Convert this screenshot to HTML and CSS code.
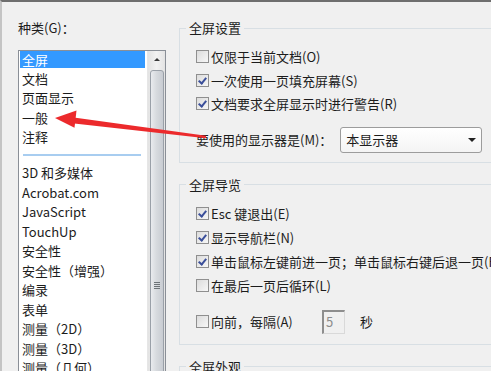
FILE: index.html
```html
<!DOCTYPE html>
<html lang="zh-CN">
<head>
    <meta charset="UTF-8">
    <title>首选项</title>
    <link rel="stylesheet" href="styles.css">
</head>
<body>
<div class="window">
    <!-- category list -->
    <div class="categories">
        <div class="cat-label">种类(G)：</div>
        <div class="listbox">
            <ul class="items">
                <li class="selected">全屏</li>
                <li>文档</li>
                <li>页面显示</li>
                <li>一般</li>
                <li>注释</li>
                <li class="sep"></li>
                <li>3D 和多媒体</li>
                <li>Acrobat.com</li>
                <li>JavaScript</li>
                <li>TouchUp</li>
                <li>安全性</li>
                <li>安全性（增强）</li>
                <li>编录</li>
                <li>表单</li>
                <li>测量（2D）</li>
                <li>测量（3D）</li>
                <li>测量（几何）</li>
            </ul>
            <div class="scrollbar">
                <div class="scroll-up"></div>
                <div class="thumb"><span class="grip"></span></div>
            </div>
        </div>
    </div>

    <!-- settings groups -->
    <div class="settings">
        <fieldset class="group group-first">
            <legend>全屏设置</legend>
            <label class="check-row"><span class="box"></span>仅限于当前文档(O)</label>
            <label class="check-row"><span class="box checked"></span>一次使用一页填充屏幕(S)</label>
            <label class="check-row"><span class="box checked"></span>文档要求全屏显示时进行警告(R)</label>
            <div class="field-row">
                <span class="field-label">要使用的显示器是(M)：</span>
                <div class="select">
                    <span>本显示器</span>
                    <span class="caret"></span>
                </div>
            </div>
        </fieldset>

        <fieldset class="group">
            <legend>全屏导览</legend>
            <label class="check-row nav"><span class="box checked"></span>Esc 键退出(E)</label>
            <label class="check-row nav"><span class="box checked"></span>显示导航栏(N)</label>
            <label class="check-row nav"><span class="box checked"></span>单击鼠标左键前进一页；单击鼠标右键后退一页(F)</label>
            <label class="check-row nav"><span class="box"></span>在最后一页后循环(L)</label>
            <div class="field-row">
                <label class="check-row interval"><span class="box"></span>向前，每隔(A)</label>
                <div class="num-input">5</div>
                <span class="unit">秒</span>
            </div>
        </fieldset>

        <fieldset class="group group-last">
            <legend>全屏外观</legend>
        </fieldset>
    </div>

    <!-- red annotation arrow -->
    <svg class="arrow" width="491" height="371" viewBox="0 0 491 371">
        <polygon points="72,117.2 72,123.2 206,138.2 206,135.8" fill="#ec2a2c"/>
        <polygon points="55,118 76.5,110.5 74.5,127.8" fill="#ec2a2c"/>
    </svg>
</div>
</body>
</html>
```

FILE: styles.css
```css
/* dialog base */
body {
    margin: 0;
    background-color: #f0f0f0;
    font-family: "Noto Sans CJK SC", "Noto Sans", sans-serif;
    font-size: 13px;
    color: #1c1c1c;
}
.window {
    position: relative;
    width: 491px;
    height: 371px;
    overflow: hidden;
    display: flex;
    box-sizing: border-box;
    border-top: 2px solid #6e6e6e;
    border-left: 2px solid #c4c4c4;
    padding-left: 16px;
}

/* left column */
.categories {
    width: 148px;
    flex-shrink: 0;
}
.cat-label {
    margin-top: 17px;
    line-height: 18px;
}
.listbox {
    margin-top: 13px;
    height: 340px;
    display: flex;
    background-color: #fff;
    border: 1px solid #8a8f97;
    box-sizing: border-box;
}
.items {
    list-style: none;
    margin: 0;
    padding: 0 2px 0 1px;
    flex: 1;
}
.items li {
    height: 19.5px;
    line-height: 19.5px;
    padding-left: 2px;
    white-space: nowrap;
}
.items li.selected {
    background-color: #3399ff;
    color: #fff;
    height: 17px;
    line-height: 17px;
    margin-bottom: 0.5px;
}
.items li.sep {
    height: 16.5px;
    box-sizing: border-box;
    padding: 7px 4px 0 3px;
}
.items li.sep::after {
    content: "";
    display: block;
    border-top: 2px solid #a8cdf0;
}
.scrollbar {
    width: 17px;
    background: linear-gradient(to right, #e3e3e3, #f2f2f2 50%, #e3e3e3);
    border-left: 1px solid #e6e6e6;
    display: flex;
    flex-direction: column;
    align-items: center;
}
.scroll-up {
    height: 17px;
    width: 100%;
    display: flex;
    align-items: center;
    justify-content: center;
}
.scroll-up::before {
    content: "";
    border-left: 3px solid transparent;
    border-right: 3px solid transparent;
    border-bottom: 3px solid #3a3a3a;
}
.thumb {
    width: 14px;
    flex: 1;
    margin-top: 2px;
    box-sizing: border-box;
    border: 1px solid #9aa0a8;
    border-radius: 3px;
    background: linear-gradient(to right, #e9ebee, #d7dade 45%, #c8ccd2);
    position: relative;
}
.grip {
    position: absolute;
    left: 3px;
    top: 211px;
    width: 6px;
    height: 7px;
    background: repeating-linear-gradient(to bottom, #6d7378 0, #6d7378 1px, transparent 1px, transparent 2px);
}

/* right column */
.settings {
    margin-left: 13px;
    width: 340px;
    flex-shrink: 0;
}
.group {
    margin: 0 0 13px 0;
    border: 1px solid #d8dfe4;
    padding: 8px 0 9px 16px;
    min-width: 0;
}
.group-first {
    margin-top: 17px;
}
.group legend {
    line-height: 18px;
    padding: 0 3px;
    margin-left: -10px;
}
.check-row {
    display: flex;
    align-items: center;
    height: 23.5px;
    white-space: nowrap;
}
.check-row.nav {
    height: 24px;
}
.box {
    width: 13px;
    height: 13px;
    margin-right: 2px;
    box-sizing: border-box;
    border: 1px solid #8f8f8f;
    background: linear-gradient(135deg, #dcdcdc, #f7f7f7);
    position: relative;
    flex-shrink: 0;
}
.box.checked::after {
    content: "";
    position: absolute;
    left: 3px;
    top: 1px;
    width: 3px;
    height: 6px;
    border-right: 2px solid #3b4f9a;
    border-bottom: 2px solid #3b4f9a;
    transform: rotate(40deg);
}
.field-row {
    display: flex;
    align-items: center;
    height: 26px;
    margin-top: 11px;
}
.field-label {
    margin-right: 8px;
    white-space: nowrap;
}
.select {
    width: 142px;
    height: 26px;
    flex-shrink: 0;
    box-sizing: border-box;
    border: 1px solid #9c9c9c;
    border-radius: 3px;
    background: linear-gradient(to bottom, #ffffff, #f4f4f4);
    display: flex;
    align-items: center;
    justify-content: space-between;
    padding: 0 5px 0 5px;
}
.caret {
    border-left: 4px solid transparent;
    border-right: 4px solid transparent;
    border-top: 4px solid #222;
}
.check-row.interval {
    height: 26px;
    width: 126px;
}
.num-input {
    width: 23px;
    height: 24px;
    box-sizing: border-box;
    border: 1px solid #d9d9d9;
    border-left: 2px solid #8e8e8e;
    border-top: 2px solid #8e8e8e;
    color: #8c8c8c;
    padding-left: 2px;
    line-height: 20px;
}
.unit {
    margin-left: 15px;
}
.group-last {
    height: 40px;
}

/* annotation overlay */
.arrow {
    position: absolute;
    left: -2px;
    top: -2px;
    pointer-events: none;
}
```
